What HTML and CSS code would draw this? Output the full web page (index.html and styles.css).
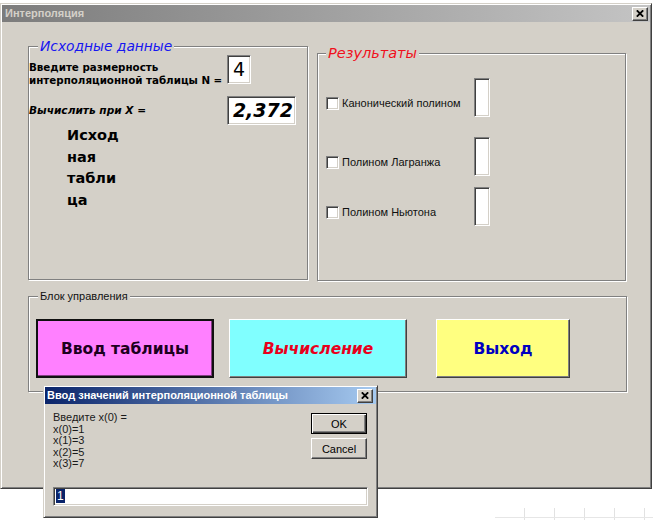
FILE: index.html
```html
<!DOCTYPE html>
<html lang="ru">
<head>
<meta charset="utf-8">
<title>Интерполяция</title>
<link rel="stylesheet" href="styles.css">
</head>
<body>
<div class="window">
  <div class="titlebar">
    <span class="title inactive">Интерполяция</span>
    <span class="close-btn"><svg width="8" height="7" viewBox="0 0 8 7"><path d="M0.8 0.3 L7.2 6.7 M7.2 0.3 L0.8 6.7" stroke="#000" stroke-width="1.8"/></svg></span>
  </div>
  <div class="client">
    <div class="top-row">
      <div class="group group-source">
        <div class="legend legend-source">Исходные данные</div>
        <div class="n-row">
          <div class="n-label">Введите размерность<br>интерполяционной таблицы N =</div>
          <div class="field field-n">4</div>
        </div>
        <div class="x-row">
          <div class="x-label">Вычислить при X =</div>
          <div class="field field-x">2,372</div>
        </div>
        <div class="table-label">Исход<br>ная<br>табли<br>ца</div>
      </div>
      <div class="group group-results">
        <div class="legend legend-results">Результаты</div>
        <div class="res-row res-row-1">
          <div class="check-label"><span class="checkbox"></span><span>Канонический полином</span></div>
          <div class="field field-res"></div>
        </div>
        <div class="res-row res-row-2">
          <div class="check-label"><span class="checkbox"></span><span>Полином Лагранжа</span></div>
          <div class="field field-res"></div>
        </div>
        <div class="res-row res-row-3">
          <div class="check-label"><span class="checkbox"></span><span>Полином Ньютона</span></div>
          <div class="field field-res"></div>
        </div>
      </div>
    </div>
    <div class="group group-control">
      <div class="legend legend-control">Блок управления</div>
      <div class="buttons">
        <div class="btn btn-input">Ввод таблицы</div>
        <div class="btn btn-calc">Вычисление</div>
        <div class="btn btn-exit">Выход</div>
      </div>
    </div>
  </div>
</div>
<div class="sheet"></div>

<div class="dialog">
  <div class="dlg-titlebar">
    <span class="title">Ввод значений интерполяционной таблицы</span>
    <span class="close-btn"><svg width="8" height="7" viewBox="0 0 8 7"><path d="M0.8 0.3 L7.2 6.7 M7.2 0.3 L0.8 6.7" stroke="#000" stroke-width="1.8"/></svg></span>
  </div>
  <div class="dlg-body">
    <div class="dlg-top">
      <div class="dlg-text">Введите x(0) =<br>x(0)=1<br>x(1)=3<br>x(2)=5<br>x(3)=7</div>
      <div class="dlg-buttons">
        <div class="push push-default">OK</div>
        <div class="push">Cancel</div>
      </div>
    </div>
    <div class="dlg-input"><span class="sel">1</span></div>
  </div>
</div>
</body>
</html>
```

FILE: styles.css
```css
* { box-sizing: border-box; }

body {
  margin: 0;
  width: 653px;
  height: 520px;
  overflow: hidden;
  position: relative;
  background: #fff;
  font-family: "Liberation Sans", Arial, sans-serif;
  font-size: 11px;
  color: #000;
}

.window {
  margin-top: 3px;
  width: 652px;
  height: 486px;
  background: #d4d0c8;
  border: 1px solid;
  border-color: #d4d0c8 #404040 #404040 #d4d0c8;
  padding: 1px;
  box-shadow: inset 1px 1px #fff, inset -1px -1px #808080;
}

.titlebar {
  height: 17px;
  background: linear-gradient(to right, #7c7c7c, #c4c4c4);
  display: flex;
  align-items: center;
  justify-content: space-between;
  padding: 0 2px 0 3px;
}

.title {
  font-family: "Liberation Sans", Arial, sans-serif;
  font-weight: bold;
  font-size: 11px;
  color: #fff;
  line-height: 13px;
}
.title.inactive { color: #d4d0c8; }

.close-btn {
  width: 16px;
  height: 14px;
  background: #d4d0c8;
  border: 1px solid;
  border-color: #fff #404040 #404040 #fff;
  box-shadow: inset -1px -1px #808080;
  display: flex;
  align-items: center;
  justify-content: center;
}
.close-btn svg { display: block; }

.client {
  padding: 24px 0 0 26px;
}

.top-row {
  display: flex;
  align-items: flex-start;
  gap: 9px;
}

.group {
  border: 1px solid #808080;
  box-shadow: 1px 1px 0 #fff, inset 1px 1px 0 #fff;
}

.group-source { width: 280px; height: 234px; }
.group-results { width: 309px; height: 228px; margin-top: 7px; }
.group-control { width: 599px; height: 96px; margin-top: 15px; }

.legend {
  width: fit-content;
  background: #d4d0c8;
  padding: 0 2px;
}

.legend-source,
.legend-results {
  font-family: "DejaVu Sans", Verdana, sans-serif;
  font-style: italic;
  font-size: 14px;
  line-height: 17px;
  margin: -9px 0 0 9px;
}
.legend-source { color: #1616f0; font-size: 13.8px; }
.legend-results { color: #f0101c; margin-left: 8px; font-size: 14.5px; }

.legend-control {
  font-size: 11px;
  line-height: 14px;
  margin: -8px 0 0 9px;
  color: #101010;
}

.n-row {
  display: flex;
  align-items: flex-start;
}

.n-label {
  width: 198px;
  margin-top: 6px;
  font-family: "DejaVu Sans", Verdana, sans-serif;
  font-weight: bold;
  font-size: 10.3px;
  line-height: 13px;
  white-space: nowrap;
}

.field {
  background: #fff;
  border: 1px solid;
  border-color: #808080 #fff #fff #808080;
  box-shadow: inset 1px 1px #404040, inset -1px -1px #d4d0c8;
}

.field-n {
  width: 24px;
  height: 29px;
  font-family: "DejaVu Sans", Verdana, sans-serif;
  font-size: 19px;
  line-height: 27px;
  text-align: center;
}

.x-row {
  display: flex;
  align-items: center;
  margin-top: 9px;
}

.x-label {
  width: 198px;
  font-family: "DejaVu Sans", Verdana, sans-serif;
  font-weight: bold;
  font-style: italic;
  font-size: 10.6px;
  line-height: 13px;
  white-space: nowrap;
}

.field-x {
  width: 69px;
  height: 29px;
  font-family: "DejaVu Sans", Verdana, sans-serif;
  font-weight: bold;
  font-style: italic;
  font-size: 19px;
  line-height: 27px;
  text-align: right;
  padding-right: 2px;
}

.table-label {
  margin: 0 0 0 38px;
  font-family: "DejaVu Sans", Verdana, sans-serif;
  font-weight: bold;
  font-size: 14.5px;
  line-height: 21.5px;
}

.res-row {
  display: flex;
  align-items: flex-start;
  margin-left: 8px;
}
.res-row-1 { margin-top: 16px; }
.res-row-2 { margin-top: 20px; }
.res-row-3 { margin-top: 11px; }

.check-label {
  width: 148px;
  margin-top: 19px;
  display: flex;
  align-items: center;
  gap: 3px;
  font-size: 11px;
  line-height: 13px;
  color: #101010;
}

.checkbox {
  width: 13px;
  height: 13px;
  background: #fff;
  border: 1px solid;
  border-color: #808080 #fff #fff #808080;
  box-shadow: inset 1px 1px #404040, inset -1px -1px #d4d0c8;
  flex: none;
}

.field-res {
  width: 16px;
  height: 39px;
}

.buttons {
  display: flex;
  margin: 16px 0 0 7px;
}

.btn {
  height: 59px;
  display: flex;
  align-items: center;
  justify-content: center;
  font-family: "DejaVu Sans", Verdana, sans-serif;
  font-weight: bold;
  font-size: 15.5px;
  border: 1px solid;
  border-color: #fff #404040 #404040 #fff;
  box-shadow: inset -1px -1px #808080;
}

.btn-input {
  width: 178px;
  background: #ff80ff;
  color: #1c0020;
  border: 2px solid #101010;
  box-shadow: inset -1px -1px #804080;
}

.btn-calc {
  width: 178px;
  margin-left: 15px;
  background: #80ffff;
  color: #e8001c;
  font-style: italic;
}

.btn-exit {
  width: 134px;
  margin-left: 29px;
  background: #ffff80;
  color: #0000c0;
}

.sheet {
  margin: 19px 0 0 495px;
  height: 12px;
  background:
    linear-gradient(to bottom, transparent 0 9px, #e6e6e6 9px 10px, transparent 10px),
    repeating-linear-gradient(to right, transparent 0 29px, #e2e2e2 29px 30px);
}

/* Input dialog overlays the main window */
.dialog {
  position: absolute;
  left: 43px;
  top: 385px;
  width: 335px;
  height: 133px;
  background: #d4d0c8;
  border: 1px solid;
  border-color: #d4d0c8 #404040 #404040 #d4d0c8;
  padding: 1px;
  box-shadow: inset 1px 1px #fff, inset -1px -1px #808080;
}

.dlg-titlebar {
  height: 17px;
  background: linear-gradient(to right, #0a246a, #a6caf0);
  display: flex;
  align-items: center;
  justify-content: space-between;
  padding: 0 3px 0 2px;
}

.dlg-body {
  padding: 8px 9px 0 8px;
}

.dlg-top {
  display: flex;
  align-items: flex-start;
  height: 58px;
}

.dlg-text {
  flex: 1;
  font-size: 11px;
  line-height: 11.5px;
  color: #1a1a1a;
}

.dlg-buttons {
  width: 56px;
  margin-top: 1px;
  display: flex;
  flex-direction: column;
  gap: 4px;
}

.push {
  height: 21px;
  display: flex;
  align-items: center;
  justify-content: center;
  font-size: 11px;
  background: #d4d0c8;
  border: 1px solid;
  border-color: #fff #404040 #404040 #fff;
  box-shadow: inset -1px -1px #808080;
}

.push-default {
  border: 1px solid #000;
  box-shadow: inset 1px 1px #fff, inset -1px -1px #404040, inset -2px -2px #808080;
}

.dlg-input {
  margin-top: 17px;
  width: 315px;
  height: 19px;
  background: #fff;
  border: 1px solid;
  border-color: #808080 #fff #fff #808080;
  box-shadow: inset 1px 1px #404040, inset -1px -1px #d4d0c8;
  padding: 1px 0 0 2px;
  font-size: 12px;
  line-height: 15px;
}

.sel {
  background: #0a246a;
  color: #fff;
  padding: 0 1px;
}
```
